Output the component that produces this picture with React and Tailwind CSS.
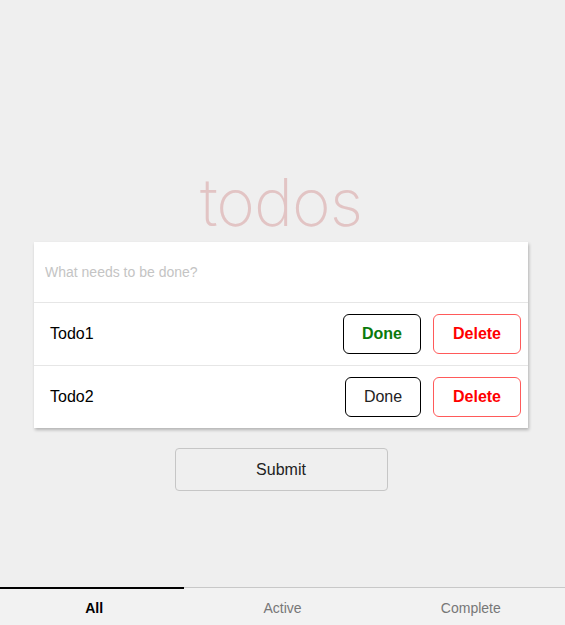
import React, { useState } from "react";

const todos = [
  { id: 1, text: "Todo1", done: true },
  { id: 2, text: "Todo2", done: false },
];

export default function App() {
  const [tab, setTab] = useState("All");

  return (
    <div className="min-h-screen bg-[#efefef] flex flex-col font-['Liberation_Sans',Arial,sans-serif]">
      <div className="flex-1 pt-[166px] pr-[3px]">
        <h1 className="text-center text-[66px] leading-[72px] font-extralight text-[#e2c4c4] font-['Inter',sans-serif] tracking-[-1px]">
          todos
        </h1>

        <div className="mx-auto mt-[4px] w-[494px] bg-white shadow-[1px_2px_3px_rgba(0,0,0,0.25)]">
          <input
            className="w-full h-[60px] px-[11px] text-[14px] outline-none placeholder:text-[#c4c4c4]"
            placeholder="What needs to be done?"
          />
          {todos.map((t) => (
            <div
              key={t.id}
              className="flex items-center h-[63px] border-t border-[#e6e6e6] pl-[16px] pr-[7px]"
            >
              <span className="flex-1 text-[16px] text-black">{t.text}</span>
              <button
                className={
                  "h-[40px] rounded-[6px] border border-black bg-white text-[16px] " +
                  (t.done ? "w-[78px] font-bold text-[#0a7a0a]" : "w-[76px] text-[#222]")
                }
              >
                Done
              </button>
              <button className="ml-[12px] h-[40px] w-[88px] rounded-[6px] border border-[#ff5a5a] bg-white text-[16px] font-bold text-[#ff0000]">
                Delete
              </button>
            </div>
          ))}
        </div>

        <div className="flex justify-center mt-[20px]">
          <button className="w-[213px] h-[43px] rounded-[4px] border border-[#c6c6c6] bg-[#efefef] text-[16px] text-[#222]">
            Submit
          </button>
        </div>
      </div>

      <div className="grid grid-cols-3 h-[38px] border-t border-[#c8c8c8] bg-[#f2f2f2]">
        {["All", "Active", "Complete"].map((name) => (
          <button
            key={name}
            onClick={() => setTab(name)}
            className={
              "relative pt-[3px] text-[14px] " +
              (tab === name ? "font-bold text-black" : "text-[#777]")
            }
          >
            {tab === name && (
              <span className="absolute left-0 right-[4px] top-[-1px] h-[2px] bg-black" />
            )}
            {name}
          </button>
        ))}
      </div>
    </div>
  );
}
